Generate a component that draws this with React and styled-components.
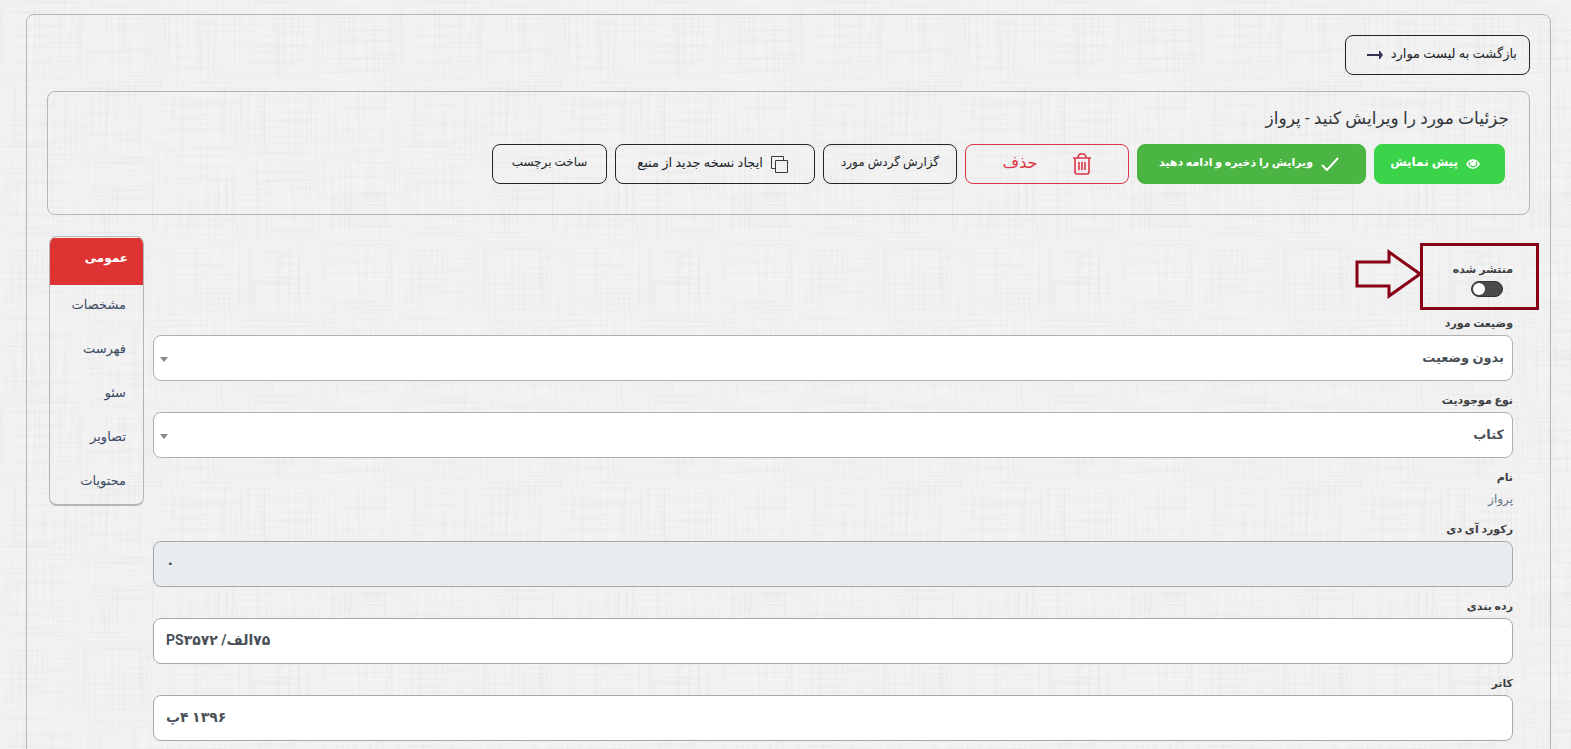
import React from 'react'
import styled, { createGlobalStyle } from 'styled-components'

const fiber = (freq, seed) =>
    `<filter id='f${seed}' x='0' y='0' width='100%' height='100%'><feTurbulence type='fractalNoise' baseFrequency='${freq}' numOctaves='2' seed='${seed}' stitchTiles='stitch'/><feColorMatrix values='0 0 0 0 0.45 0 0 0 0 0.45 0 0 0 0 0.47 0.9 0 0 0 -0.41'/></filter><rect width='400' height='400' filter='url(#f${seed})' opacity='0.32'/>`

const linen = encodeURIComponent(
    `<svg xmlns='http://www.w3.org/2000/svg' width='400' height='400'>${fiber('0.012 0.5', 3)}${fiber('0.5 0.012', 8)}</svg>`
)

const GlobalStyle = createGlobalStyle`
    *{
        box-sizing:border-box;
    }
    body{
        margin:0;
        background-color:#f3f3f3;
        background-image:url("data:image/svg+xml,${linen}");
        color:#3d4043;
        font-family:Roboto, "DejaVu Sans", sans-serif;
        font-size:13px;
    }
    button, input, select{
        font-family:inherit;
    }
`

const Page = styled.main`
    margin:14px 20px 14px 26px;
    padding:20px;
    border:1px solid #b5b5b5;
    border-radius:8px;
`

const Button = styled.button`
    display:inline-flex;
    justify-content:${props => (props.$start ? 'flex-start' : 'center')};
    align-items:center;
    gap:${props => props.$gap || 8}px;
    min-width:${props => props.$width}px;
    height:40px;
    padding:0 8px;
    padding-inline-start:${props => props.$start || 8}px;
    border:1px solid ${props => props.$line || '#212529'};
    border-radius:8px;
    background:${props => props.$fill || 'transparent'};
    color:${props => props.$color || '#212529'};
    font-size:${props => props.$size || 13}px;
    font-weight:${props => (props.$fill ? 700 : 400)};
    white-space:nowrap;
    cursor:pointer;
`

const ButtonText = styled.span`
    padding-bottom:4px;
`

const BackLink = styled(Button).attrs({ as: 'a' })`
    text-decoration:none;
`

const Toolbar = styled.section`
    margin-top:16px;
    padding:12px 20px 30px;
    border:1px solid #b5b5b5;
    border-radius:8px;
`

const Title = styled.h1`
    margin:0;
    color:#32363a;
    font-size:17px;
    font-weight:400;
    line-height:28px;
`

const ButtonRow = styled.div`
    display:flex;
    flex-wrap:wrap;
    gap:8px;
    padding:12px 4px 0;
`

const Content = styled.div`
    display:flex;
    align-items:flex-start;
    gap:9px;
    margin-top:21px;
    padding:0 17px 0 2px;
`

const Form = styled.form`
    flex:1;
    min-width:0;
    padding-top:22px;
`

const Field = styled.div`
    margin-bottom:8px;
`

const Label = styled.label`
    display:block;
    font-size:11px;
    font-weight:700;
    line-height:23px;
`

const Input = styled.input`
    display:block;
    width:100%;
    height:46px;
    padding:0 12px 2px;
    border:1px solid #a8a8a8;
    border-radius:8px;
    background:#fff;
    color:#495057;
    font-size:14px;
    font-weight:700;
    text-align:left;
    &:disabled{
        background:#e8ecef;
    }
`

const SelectWrap = styled.div`
    position:relative;
`

const Select = styled.select`
    display:block;
    width:100%;
    height:46px;
    padding:0 8px 2px;
    appearance:none;
    border:1px solid #b0b0b0;
    border-radius:8px;
    background:#fff;
    color:#495057;
    font-size:13px;
    font-weight:700;
`

const Caret = styled.span`
    position:absolute;
    left:7px;
    top:22px;
    border:4px solid transparent;
    border-top:5px solid #888;
    border-bottom:0;
    pointer-events:none;
`

const Value = styled.div`
    color:#64748b;
    font-size:12px;
    line-height:21px;
`

const Published = styled.div`
    position:relative;
    height:54px;
`

const Switch = styled.input`
    display:flex;
    align-items:center;
    width:32px;
    height:16px;
    margin:0 10px;
    padding:0 1px;
    appearance:none;
    direction:ltr;
    border:1px solid #333;
    border-radius:8px;
    background:#4a4a4a;
    &::before{
        content:'';
        width:12px;
        height:12px;
        border-radius:50%;
        background:#fff;
    }
    &:checked{
        justify-content:flex-end;
    }
`

const Highlight = styled.div`
    position:absolute;
    top:-15px;
    right:-26px;
    width:119px;
    height:67px;
    border:3px solid #880015;
    pointer-events:none;
`

const Pointer = styled.svg`
    position:absolute;
    top:-9px;
    right:91px;
`

const Tabs = styled.nav`
    width:95px;
    padding-top:1px;
    overflow:hidden;
    border:1px solid #b5b5b5;
    border-bottom-width:2px;
    border-radius:8px;
`

const Tab = styled.a`
    display:block;
    height:${props => (props.$active ? 47 : 44)}px;
    padding:0 ${props => (props.$active ? 15 : 17)}px;
    background:${props => (props.$active ? '#dd3333' : 'transparent')};
    color:${props => (props.$active ? '#fff' : '#3b4a63')};
    font-size:${props => (props.$active ? 12 : 13)}px;
    font-weight:${props => (props.$active ? 700 : 400)};
    line-height:40px;
    text-decoration:none;
    &:last-child{
        height:43px;
    }
`

const ArrowIcon = () => (
    <svg width="16" height="10" viewBox="0 0 16 10" fill="#3b3054">
        <path d="M0 4h12V1h1l3 4-3 4h-1V6H0z" />
    </svg>
)

const EyeIcon = () => (
    <svg width="14" height="10" viewBox="0 0 14 10">
        <path d="M0 5C3-1.300 11-1.300 14 5 11 11.300 3 11.300 0 5z" fill="#fff" />
        <path d="M3.500 2.500q-1.500 4.500 3.500 5.300 5-.8 3.500-5.300" fill="none" stroke="#3ad34a" strokeWidth="1.200" />
        <path d="M5.500 3.600q.3-1.200 1.600-1.300" fill="none" stroke="#3ad34a" />
    </svg>
)

const CheckIcon = () => (
    <svg width="18" height="14" viewBox="0 0 18 14" fill="none" stroke="#fff" strokeWidth="2">
        <path d="M1 8l5 5L17 1" />
    </svg>
)

const TrashIcon = () => (
    <svg width="18" height="22" viewBox="0 0 18 22" fill="none" stroke="#dc3545" strokeWidth="1.600">
        <path d="M0 5h18M5 5q0-4 3-4h2q3 0 3 4M2 5v14q0 2 2 2h10q2 0 2-2V5M6 9v8M9 9v8M12 9v8" />
    </svg>
)

const CopyIcon = () => (
    <svg width="17" height="17" viewBox="0 0 17 17" fill="none" stroke="#3a3a3a">
        <path d="M4.500 4.500h12v12h-12zM4 12.500H.5V.5h12V4" />
    </svg>
)

const tabs = ['عمومی', 'مشخصات', 'فهرست', 'سئو', 'تصاویر', 'محتویات']

function SelectField({ id, label, value }) {
    return (
        <Field>
            <Label htmlFor={id}>{label}</Label>
            <SelectWrap>
                <Select id={id} defaultValue={value}>
                    <option>{value}</option>
                </Select>
                <Caret />
            </SelectWrap>
        </Field>
    )
}

function InputField({ id, label, value, disabled }) {
    return (
        <Field>
            <Label htmlFor={id}>{label}</Label>
            <Input id={id} defaultValue={value} disabled={disabled} />
        </Field>
    )
}

function App() {
    return (
        <>
            <GlobalStyle />
            <Page dir="rtl" lang="fa">
                <BackLink href="#list" $width={185} $start={12}>
                    <ButtonText>بازگشت به لیست موارد</ButtonText>
                    <ArrowIcon />
                </BackLink>
                <Toolbar>
                    <Title>جزئیات مورد را ویرایش کنید - پرواز</Title>
                    <ButtonRow>
                        <Button $width={131} $start={24} $size={12} $fill="#3ad34a" $line="#3ad34a" $color="#fff">
                            <EyeIcon />
                            <ButtonText>پیش نمایش</ButtonText>
                        </Button>
                        <Button $width={229} $start={26} $size={11} $fill="#4bb543" $line="#4bb543" $color="#fff">
                            <CheckIcon />
                            <ButtonText>ویرایش را ذخیره و ادامه دهید</ButtonText>
                        </Button>
                        <Button $width={164} $line="#dc3545" $color="#dc3545" $size={16} $gap={36}>
                            <TrashIcon />
                            <ButtonText>حذف</ButtonText>
                        </Button>
                        <Button $width={134} $size={12}>
                            <ButtonText>گزارش گردش مورد</ButtonText>
                        </Button>
                        <Button $width={200} $start={26}>
                            <CopyIcon />
                            <ButtonText>ایجاد نسخه جدید از منبع</ButtonText>
                        </Button>
                        <Button $width={115} $size={12}>
                            <ButtonText>ساخت برچسب</ButtonText>
                        </Button>
                    </ButtonRow>
                </Toolbar>
                <Content>
                    <Form>
                        <Published>
                            <Label htmlFor="published">منتشر شده</Label>
                            <Switch type="checkbox" role="switch" id="published" />
                            <Highlight />
                            <Pointer width="67" height="50" viewBox="0 0 67 50" fill="none" stroke="#880015" strokeWidth="3">
                                <path d="M2 13h32V3l31 22-31 22V37H2z" />
                            </Pointer>
                        </Published>
                        <SelectField id="status" label="وضیعت مورد" value="بدون وضعیت" />
                        <SelectField id="entity" label="نوع موجودیت" value="کتاب" />
                        <Field>
                            <Label as="div">نام</Label>
                            <Value>پرواز</Value>
                        </Field>
                        <InputField id="record" label="رکورد آی دی" value="۰" disabled />
                        <InputField id="class" label="رده بندی" value="۷۵الف/ PS۳۵۷۲" />
                        <InputField id="cutter" label="کاتر" value="۱۳۹۶ ۴پ" />
                    </Form>
                    <Tabs>
                        {tabs.map((name, i) => (
                            <Tab key={name} href={`#tab-${i}`} $active={i === 0}>{name}</Tab>
                        ))}
                    </Tabs>
                </Content>
            </Page>
        </>
    )
}

export default App
